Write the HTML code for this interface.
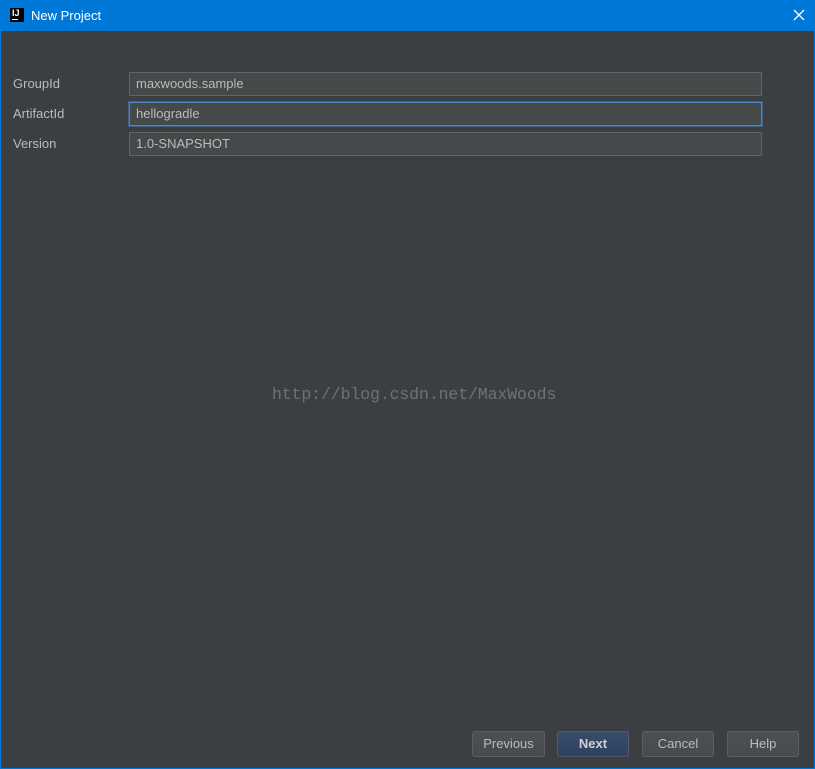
<!DOCTYPE html>
<html><head><style>
*{margin:0;padding:0;box-sizing:border-box}
body{width:815px;height:769px;background:#0078d7;font-family:"Liberation Sans",sans-serif;position:relative;overflow:hidden}
.title{position:absolute;left:0;top:0;width:815px;height:31px;background:#0078d7;color:#fff;font-size:13px}
.body{position:absolute;left:1px;top:31px;width:813px;height:737px;background:#3c3f41}
.lbl{position:absolute;left:13px;color:#bbbbbb;font-size:13px}
.fld{position:absolute;left:129px;width:633px;height:24px;background:#45494a;border:1px solid #646464;color:#bbbbbb;font-size:13px;padding:3px 0 0 6px}
.btn{position:absolute;top:731px;width:73px;height:26px;border:1px solid #5e6060;border-radius:3px;background:linear-gradient(#4c5052,#474b4d);color:#bbbbbb;font-size:13px;text-align:center;line-height:24px}
</style></head><body>
<div class="title">
<div style="position:absolute;left:10px;top:8px;width:14px;height:14px;background:#000;color:#fff;font-size:9px;font-weight:bold;line-height:10px;padding-left:2px">IJ<div style="position:absolute;left:2px;bottom:2px;width:6px;height:1px;background:#fff"></div></div>
<div style="position:absolute;left:31px;top:8px">New Project</div>
<svg style="position:absolute;left:793px;top:9px" width="12" height="12"><path d="M1 1L11 11M11 1L1 11" stroke="#fff" stroke-width="1.3"/></svg>
</div>
<div class="body"></div>
<div class="lbl" style="top:76px">GroupId</div>
<div class="lbl" style="top:106px">ArtifactId</div>
<div class="lbl" style="top:136px">Version</div>
<div class="fld" style="top:72px">maxwoods.sample</div>
<div class="fld" style="top:102px;border-color:#4a88c7;box-shadow:0 0 0 1px #3d6185">hellogradle</div>
<div class="fld" style="top:132px">1.0-SNAPSHOT</div>
<div style="position:absolute;left:272px;top:385px;color:#6e7275;font-family:'Liberation Mono',monospace;font-size:16.5px;letter-spacing:-0.1px">http://blog.csdn.net/MaxWoods</div>
<div class="btn" style="left:472px">Previous</div>
<div class="btn" style="left:557px;width:72px;background:linear-gradient(#384d6b,#2f4260);border-color:#4f5b6d;color:#d0d0d0;font-weight:bold">Next</div>
<div class="btn" style="left:642px;width:72px">Cancel</div>
<div class="btn" style="left:727px;width:72px">Help</div>
</body></html>
